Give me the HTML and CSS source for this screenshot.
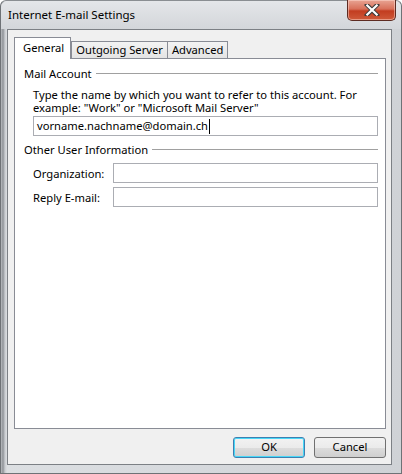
FILE: index.html
```html
<!DOCTYPE html>
<html>
<head>
<meta charset="utf-8">
<link rel="stylesheet" href="styles.css">
</head>
<body>
<div class="window">
  <div class="titlebar">
    <span class="title">Internet E-mail Settings</span>
    <div class="close">
      <svg width="16" height="12" viewBox="0 0 16 12"><path d="M3 1 L13 11 M13 1 L3 11" stroke="#3a3a3a" stroke-width="4.2" stroke-linecap="square"/><path d="M3.3 1.5 L12.7 10.5 M12.7 1.5 L3.3 10.5" stroke="#ffffff" stroke-width="2.2" stroke-linecap="square"/></svg>
    </div>
  </div>
  <div class="client">
    <div class="tabs">
      <div class="tab active">General</div>
      <div class="tab">Outgoing Server</div>
      <div class="tab">Advanced</div>
    </div>
    <div class="panel">
      <div class="group-head"><span>Mail Account</span><span class="rule"></span></div>
      <div class="indent">
        <p class="hint">Type the name by which you want to refer to this account. For example: "Work" or "Microsoft Mail Server"</p>
        <div class="field wide"><span class="value">vorname.nachname@domain.ch</span><span class="caret"></span></div>
      </div>
      <div class="group-head second"><span>Other User Information</span><span class="rule"></span></div>
      <div class="indent">
        <div class="row"><span class="label">Organization:</span><div class="field grow"></div></div>
        <div class="row"><span class="label">Reply E-mail:</span><div class="field grow"></div></div>
      </div>
    </div>
    <div class="buttons">
      <div class="btn default">OK</div>
      <div class="btn">Cancel</div>
    </div>
  </div>
</div>
</body>
</html>
```
FILE: styles.css
```css
html, body { margin: 0; padding: 0; }
body { font-family: "Noto Sans", "Open Sans", sans-serif; font-size: 11.2px; color: #000; }
.window {
  width: 402px; height: 474px; box-sizing: border-box;
  background: linear-gradient(90deg, #b9bcc0 0px, #8f9398 2px, #c9ccd0 4px, #dcdfe2 6px, #d6d9dd 50%, #cfd2d6 100%);
  display: flex; flex-direction: column;
  border-radius: 6px 6px 0 0;
  border: 1px solid #6e7276;
  border-top-color: #8a8e92;
}
.titlebar {
  height: 28px; display: flex; align-items: flex-start; position: relative;
  background: linear-gradient(180deg, #e4e6e9 0%, #d3d6da 100%);
  border-radius: 6px 6px 0 0;
}
.title { padding: 6px 0 0 7px; font-size: 11.5px; line-height: 16px; color: #000; }
.close {
  position: absolute; right: 5px; top: -1px; width: 47px; height: 20px;
  border: 1px solid #5d2b22; border-top: none; border-radius: 0 0 5px 5px;
  background: linear-gradient(180deg, #e8a493 0%, #d8705a 45%, #c23d20 55%, #cf5a3a 100%);
  display: flex; align-items: center; justify-content: center;
  box-shadow: inset 0 0 0 1px rgba(255,220,210,0.5);
}
.client {
  flex: 1; margin: 0 9px 8px 6px; background: #f0f0f0;
  border: 1px solid #7c8085; display: flex; flex-direction: column;
  padding: 0 5px 0 6px;
}
.tabs { display: flex; align-items: flex-end; margin-top: 7px; height: 21px; position: relative; z-index: 1; }
.tab {
  height: 17px; box-sizing: border-box; padding: 0 4px; line-height: 16px;
  border: 1px solid #898c95; border-bottom: none; background: linear-gradient(180deg, #f3f3f3, #e4e4e4);
  margin-left: -1px;
}
.tab.active { background: #fff; margin-left: 0; padding: 0 6px 0 8px; line-height: 20px; margin-bottom: -1px; height: 22px; z-index: 2; }
.tab.active + .tab { margin-left: 0; }
.panel {
  height: 371px; box-sizing: border-box; background: #fff; border: 1px solid #898c95;
  padding: 7px 7px 0 9px;
}
.group-head { display: flex; align-items: center; height: 15px; line-height: 15px; }
.group-head .rule { flex: 1; border-top: 1px solid #a0a0a0; margin-left: 4px; height: 0; }
.group-head.second { margin-top: 6px; }
.indent { padding-left: 9px; }
.hint { margin: 7px 0 0 0; line-height: 13px; }
.field { height: 20px; box-sizing: border-box; border: 1px solid #abadb3; background: #fff; }
.wide { margin-top: 2px; display: flex; align-items: center; padding-left: 3px; }
.value { line-height: 16px; }
.caret { width: 1px; height: 15px; background: #000; margin-left: 1px; }
.row { display: flex; align-items: center; margin-top: 4px; }
.row:first-child { margin-top: 6px; }
.label { width: 80px; }
.grow { flex: 1; }
.buttons { display: flex; justify-content: flex-end; gap: 9px; margin-top: 8px; padding-right: 0; }
.btn {
  width: 72px; height: 21px; box-sizing: border-box; border: 1px solid #707070; border-radius: 3px;
  background: linear-gradient(180deg, #f2f2f2 0%, #ebebeb 50%, #dddddd 51%, #cfcfcf 100%);
  text-align: center; line-height: 18px;
}
.btn.default { border-color: #3c7fb1; box-shadow: inset 0 0 0 1px #48d7f7; }
```
